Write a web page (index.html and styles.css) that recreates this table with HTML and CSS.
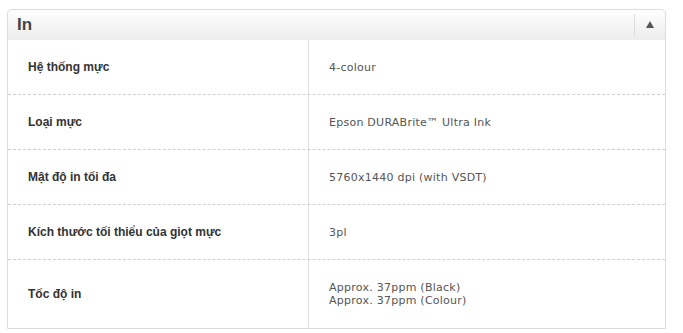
FILE: index.html
```html
<!DOCTYPE html>
<html lang="vi">
<head>
<meta charset="utf-8">
<title>In</title>
<link rel="stylesheet" href="styles.css">
</head>
<body>
<section class="panel">
  <header class="panel-head">
    <h2 class="panel-title">In</h2>
    <button class="toggle" type="button" aria-label="Thu gọn">
      <svg width="8" height="7" viewBox="0 0 8 7"><polygon points="4,0 8,7 0,7" fill="#555"/></svg>
    </button>
  </header>
  <div class="spec">
    <div class="row"><div class="label">Hệ thống mực</div><div class="value">4-colour</div></div>
    <div class="row"><div class="label">Loại mực</div><div class="value">Epson DURABrite™ Ultra Ink</div></div>
    <div class="row"><div class="label">Mật độ in tối đa</div><div class="value">5760x1440 dpi (with VSDT)</div></div>
    <div class="row"><div class="label">Kích thước tối thiểu của giọt mực</div><div class="value">3pl</div></div>
    <div class="row last"><div class="label">Tốc độ in</div><div class="value">Approx. 37ppm (Black)<br>Approx. 37ppm (Colour)</div></div>
  </div>
</section>
</body>
</html>
```
FILE: styles.css
```css
html, body {
  margin: 0;
  padding: 0;
  background: #fff;
}
body {
  padding: 9px 18px 0 7px;
  font-family: "Liberation Sans", Arial, sans-serif;
}
.panel {
  width: 657px;
  border: 1px solid #dcdcdc;
  border-radius: 5px 5px 0 0;
  background: #fff;
}
.panel-head {
  height: 30px;
  display: flex;
  align-items: center;
  justify-content: space-between;
  background: linear-gradient(#ffffff, #ececec);
  border-radius: 5px 5px 0 0;
}
.panel-title {
  margin: 0 0 0 9px;
  font-size: 17px;
  font-weight: bold;
  color: #444;
  line-height: 20px;
}
.toggle {
  width: 31px;
  height: 22px;
  margin: 0;
  padding: 0 0 2px 0;
  border: 0;
  border-left: 1px solid #dedede;
  background: transparent;
  display: flex;
  align-items: center;
  justify-content: center;
}
.spec {
  display: flex;
  flex-direction: column;
}
.row {
  display: grid;
  grid-template-columns: 301px 1fr;
  border-bottom: 1px dashed #cfcfcf;
}
.row.last {
  border-bottom: 0;
}
.label {
  min-height: 54px;
  display: flex;
  align-items: center;
  padding-left: 20px;
  border-right: 1px solid #dedede;
  font-size: 12px;
  font-weight: bold;
  color: #333;
}
.last .label, .last .value {
  min-height: 68px;
}
.value {
  display: flex;
  align-items: center;
  padding-left: 20px;
  font-family: "DejaVu Sans", Verdana, sans-serif;
  font-size: 11px;
  letter-spacing: 0.25px;
  line-height: 13px;
  color: #555;
}
```
